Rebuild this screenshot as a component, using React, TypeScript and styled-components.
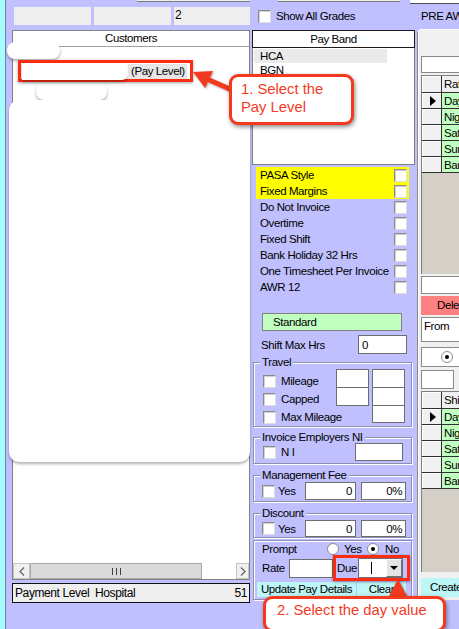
import React from 'react';
import styled, { createGlobalStyle } from 'styled-components';

const GlobalStyle = createGlobalStyle`
  html, body {
    margin: 0;
    padding: 0;
    background: #c0c0ff;
  }
  body {
    font-family: "Liberation Sans", Arial, sans-serif;
    font-size: 11.5px;
    color: #000;
  }
  * {
    box-sizing: border-box;
  }
`;

const Screen = styled.div`
  position: relative;
  width: 459px;
  height: 629px;
  overflow: hidden;
  display: flex;
  background: #c0c0ff;
  font-size: 11.5px;
  letter-spacing: -0.4px;
  line-height: 12px;
`;

const EdgeStrip = styled.div`
  width: 6px;
  flex-shrink: 0;
  background: #a6fdfd;
  border-right: 1px solid #7c7c9c;
`;

const Column = styled.div<{ $w: number }>`
  width: ${(p) => p.$w}px;
  flex-shrink: 0;
  display: flex;
  flex-direction: column;
`;

const StubLine = styled.div<{ $left: number; $w: number }>`
  margin-left: ${(p) => p.$left}px;
  width: ${(p) => p.$w}px;
  height: 2px;
  background: #f0f0f0;
  border-bottom: 1px solid #7a7a7a;
`;

/* ---------- left column ---------- */

const GrayRow = styled.div`
  display: flex;
  gap: 3px;
  margin-top: 5px;
  padding-left: 8px;
  height: 18px;
`;

const GrayCell = styled.div<{ $w: number }>`
  width: ${(p) => p.$w}px;
  background: #efefef;
  padding: 2px 0 0 1px;
  font-size: 12px;
`;

const CustomersPanel = styled.div`
  margin: 5px 0 0 6px;
  width: 238px;
  height: 550px;
  background: #fff;
  border: 1px solid #828282;
  display: flex;
  flex-direction: column;
`;

const PanelHeader = styled.div`
  height: 16px;
  line-height: 15px;
  text-align: center;
  border-bottom: 1px solid #a0a0a0;
`;

const ListArea = styled.div`
  flex: 1;
`;

const HScroll = styled.div`
  height: 16px;
  display: flex;
  background: #fff;
`;

const ScrollBtn = styled.div<{ $w: number }>`
  width: ${(p) => p.$w}px;
  background: #f0f0f0;
  border: 1px solid #c4c4c4;
  display: flex;
  align-items: center;
  justify-content: center;
`;

const ScrollThumb = styled.div`
  width: 172px;
  background: #dadada;
  border: 1px solid #a8a8a8;
  display: flex;
  align-items: center;
  justify-content: center;
  gap: 1px;
`;

const Grip = styled.span`
  width: 1px;
  height: 7px;
  background: #404040;
  margin: 0 1px;
`;

const ScrollTrack = styled.div`
  flex: 1;
  background: #fff;
`;

const StatusBar = styled.div`
  margin: 3px 0 0 6px;
  width: 238px;
  height: 20px;
  background: #efefef;
  border: 1px solid #111;
  display: flex;
  align-items: center;
  justify-content: space-between;
  padding: 0 2px;
  font-size: 12px;
  white-space: pre;
`;

/* ---------- shared controls ---------- */

const CheckBox = styled.span`
  display: inline-block;
  flex-shrink: 0;
  width: 13px;
  height: 13px;
  background: #fff;
  border: 1px solid;
  border-color: #8a8a8a #dedede #dedede #8a8a8a;
  box-shadow: inset 1px 1px 0 #d2d2d2;
`;

const Radio = styled.span<{ $checked?: boolean }>`
  display: inline-flex;
  flex-shrink: 0;
  width: 12px;
  height: 12px;
  border-radius: 50%;
  background: #fff;
  border: 1px solid #8c8c8c;
  align-items: center;
  justify-content: center;
  &::after {
    content: '';
    width: 4px;
    height: 4px;
    border-radius: 50%;
    background: ${(p) => (p.$checked ? '#000' : 'transparent')};
  }
`;

const TextBox = styled.div<{ $w: number; $h?: number; $right?: boolean }>`
  width: ${(p) => p.$w}px;
  height: ${(p) => p.$h ?? 19}px;
  flex-shrink: 0;
  background: #fff;
  border: 1px solid #6e6e6e;
  padding: 0 3px;
  display: flex;
  align-items: center;
  justify-content: ${(p) => (p.$right ? 'flex-end' : 'flex-start')};
`;

const Label = styled.span<{ $ml?: number; $w?: number }>`
  margin-left: ${(p) => p.$ml ?? 0}px;
  width: ${(p) => (p.$w ? `${p.$w}px` : 'auto')};
  flex-shrink: 0;
  white-space: nowrap;
`;

/* ---------- middle column ---------- */

const ShowRow = styled.div`
  margin-top: 6px;
  height: 16px;
  padding-left: 8px;
  display: flex;
  align-items: center;
  gap: 5px;
  white-space: nowrap;
`;

const PayBand = styled.div`
  margin: 6px 0 0 2px;
  width: 163px;
`;

const PayBandHeader = styled.div`
  height: 18px;
  line-height: 16px;
  background: #fff;
  border: 1px solid #1a1a1a;
  text-align: center;
  overflow: hidden;
`;

const PayBandList = styled.div`
  height: 117px;
  background: #fff;
  border: 1px solid #808080;
  border-top: none;
  padding: 1px;
  overflow: hidden;
`;

const BandItem = styled.div<{ $selected?: boolean }>`
  width: 133px;
  height: 14px;
  line-height: 14px;
  padding-left: 6px;
  background: ${(p) => (p.$selected ? '#ebebeb' : 'transparent')};
`;

const Options = styled.div`
  margin: 2px 0 0 6px;
  width: 153px;
`;

const OptionRow = styled.div<{ $hl?: boolean }>`
  height: 16px;
  display: flex;
  align-items: center;
  justify-content: space-between;
  padding: 0 2px 0 4px;
  white-space: nowrap;
  background: ${(p) => (p.$hl ? '#ffff00' : 'transparent')};
`;

const StandardBox = styled.div`
  margin: 18px 0 0 12px;
  width: 140px;
  height: 18px;
  line-height: 16px;
  padding-left: 10px;
  background: #c0ffc0;
  border: 1px solid #808080;
`;

const FieldRow = styled.div`
  margin-top: 4px;
  height: 19px;
  padding: 0 10px 0 11px;
  display: flex;
  align-items: center;
  justify-content: space-between;
  white-space: nowrap;
`;

const GroupBox = styled.div<{ $mt: number; $h: number }>`
  margin: ${(p) => p.$mt}px 0 0 3px;
  width: 159px;
  height: ${(p) => p.$h}px;
  border: 1px solid #8e8eae;
  box-shadow: inset 1px 1px 0 #fff, 1px 1px 0 #fff;
  display: flex;
  flex-direction: column;
`;

const GroupTitle = styled.div`
  align-self: flex-start;
  margin: -7px 0 0 6px;
  padding: 0 2px;
  height: 12px;
  line-height: 12px;
  background: #c0c0ff;
  white-space: nowrap;
`;

const TravelBody = styled.div`
  display: flex;
  margin-top: 1px;
  padding-left: 9px;
`;

const CheckStack = styled.div`
  width: 73px;
  margin-top: 3px;
  display: flex;
  flex-direction: column;
`;

const CheckLine = styled.div`
  height: 18px;
  display: flex;
  align-items: center;
  gap: 5px;
  white-space: nowrap;
`;

const BoxStack = styled.div<{ $ml?: number }>`
  margin-left: ${(p) => p.$ml ?? 0}px;
  display: flex;
  flex-direction: column;
  & > * + * {
    margin-top: -1px;
  }
`;

const GroupRow = styled.div<{ $mt?: number; $h: number; $pl?: number }>`
  margin-top: ${(p) => p.$mt ?? 0}px;
  height: ${(p) => p.$h}px;
  padding-left: ${(p) => p.$pl ?? 9}px;
  display: flex;
  align-items: center;
`;

const Combo = styled.div`
  width: 45px;
  height: 20px;
  background: #fff;
  border: 1px solid #6e6e6e;
  display: flex;
  align-items: stretch;
`;

const Caret = styled.span`
  width: 1px;
  margin: 3px 0 3px 12px;
  background: #000;
`;

const ComboButton = styled.div`
  margin-left: auto;
  width: 16px;
  background: #e4e4e4;
  border: 1px solid;
  border-color: #fff #707070 #707070 #fff;
  display: flex;
  align-items: center;
  justify-content: center;
  &::after {
    content: '';
    border-top: 4px solid #000;
    border-left: 4px solid transparent;
    border-right: 4px solid transparent;
  }
`;

const CyanButton = styled.div<{ $w: number; $ml?: number }>`
  width: ${(p) => p.$w}px;
  margin-left: ${(p) => p.$ml ?? 0}px;
  height: 15px;
  background: #bdf6f6;
  text-align: center;
  line-height: 15px;
  overflow: hidden;
  white-space: nowrap;
`;

/* ---------- right column ---------- */

const RightTop = styled.div`
  margin-left: -7px;
  width: 49px;
  height: 4px;
  background: #fff;
  border-bottom: 1px solid #505050;
`;

const PreLabel = styled.div`
  margin-top: 6px;
  padding-left: 4px;
  height: 12px;
  white-space: nowrap;
`;

const TabPage = styled.div`
  margin-top: 7px;
  width: 70px;
  height: 571px;
  background: #f0f0f0;
  border-left: 1px solid #8a8a8a;
  border-top: 1px solid #fff;
  box-shadow: inset 1px 0 0 #fff;
  padding-left: 3px;
  display: flex;
  flex-direction: column;
  clip-path: polygon(3px 0, 100% 0, 100% 100%, 0 100%, 0 3px);
`;

const Field = styled.div<{ $mt: number; $h: number; $w?: number }>`
  margin-top: ${(p) => p.$mt}px;
  height: ${(p) => p.$h}px;
  width: ${(p) => p.$w ?? 66}px;
  background: #fff;
  border: 1px solid #8a8a8a;
  padding: 2px 0 0 2px;
  flex-shrink: 0;
`;

const RadioField = styled(Field)`
  display: flex;
  align-items: center;
  padding: 0 0 0 19px;
`;

const DeleteBtn = styled.div`
  margin-top: 2px;
  height: 19px;
  width: 66px;
  background: #ff8080;
  padding-left: 16px;
  line-height: 19px;
  white-space: nowrap;
`;

const CreateBtn = styled.div`
  margin-top: 6px;
  height: 19px;
  width: 66px;
  background: #bdf6f6;
  padding-left: 9px;
  line-height: 19px;
  white-space: nowrap;
`;

const Grid = styled.div<{ $mt: number; $h: number }>`
  margin-top: ${(p) => p.$mt}px;
  height: ${(p) => p.$h}px;
  width: 66px;
  background: #d4d0c8;
  border-left: 1px solid #808080;
  border-top: 1px solid #808080;
  display: flex;
  flex-direction: column;
  flex-shrink: 0;
`;

const GridRow = styled.div<{ $h: number }>`
  height: ${(p) => p.$h}px;
  display: flex;
`;

const Selector = styled.div`
  width: 20px;
  background: #f0f0f0;
  border-right: 1px solid #303030;
  border-bottom: 1px solid #303030;
  box-shadow: inset 1px 1px 0 #fff;
  display: flex;
  align-items: center;
  justify-content: center;
`;

const Pointer = styled.span`
  margin-left: 3px;
  border-left: 6px solid #000;
  border-top: 5px solid transparent;
  border-bottom: 5px solid transparent;
`;

const Cell = styled.div<{ $header?: boolean }>`
  flex: 1;
  background: ${(p) => (p.$header ? '#f0f0f0' : '#c0ffc0')};
  border-bottom: 1px solid #303030;
  padding-left: 2px;
  display: flex;
  align-items: center;
  white-space: nowrap;
  overflow: hidden;
`;

/* ---------- overlays ---------- */

const Redaction = styled.div<{ $x: number; $y: number; $w: number; $h: number; $r?: number }>`
  position: absolute;
  left: ${(p) => p.$x}px;
  top: ${(p) => p.$y}px;
  width: ${(p) => p.$w}px;
  height: ${(p) => p.$h}px;
  background: #fff;
  border-radius: ${(p) => p.$r ?? 8}px;
  box-shadow: 0 2px 3px rgba(0, 0, 0, 0.3);
`;

const Highlight = styled.div<{ $x: number; $y: number; $w: number; $h: number }>`
  position: absolute;
  left: ${(p) => p.$x}px;
  top: ${(p) => p.$y}px;
  width: ${(p) => p.$w}px;
  height: ${(p) => p.$h}px;
  border: 3px solid #fb2c12;
  box-shadow: 0 1px 3px rgba(0, 0, 0, 0.35);
  display: flex;
  align-items: center;
`;

const PayField = styled.div`
  margin-left: 1px;
  width: 106px;
  height: 17px;
  flex-shrink: 0;
  background: #fff;
  border-radius: 0 6px 6px 0;
  box-shadow: 0 2px 3px rgba(0, 0, 0, 0.3);
`;

const PayTag = styled.div`
  width: 59px;
  height: 15px;
  flex-shrink: 0;
  background: #e6e6e6;
  padding-left: 3px;
  line-height: 15px;
  white-space: nowrap;
`;

const Callout = styled.div<{ $x: number; $y: number; $w: number; $h: number; $pt: number; $pl: number }>`
  position: absolute;
  left: ${(p) => p.$x}px;
  top: ${(p) => p.$y}px;
  width: ${(p) => p.$w}px;
  height: ${(p) => p.$h}px;
  padding: ${(p) => p.$pt}px 0 0 ${(p) => p.$pl}px;
  background: #fff;
  border: 3px solid #f33a1f;
  border-radius: 9px;
  box-shadow: 1px 2px 4px rgba(0, 0, 0, 0.45);
  color: #f33a1f;
  font-family: "Liberation Sans", Arial, Helvetica, sans-serif;
  font-size: 14.8px;
  line-height: 18px;
  letter-spacing: 0;
  white-space: nowrap;
`;

const ArrowLayer = styled.svg`
  position: absolute;
  left: 0;
  top: 0;
  width: 459px;
  height: 629px;
  pointer-events: none;
  filter: drop-shadow(1px 1px 1px rgba(0, 0, 0, 0.35));
`;

const options = [
  { label: 'PASA Style', hl: true },
  { label: 'Fixed Margins', hl: true },
  { label: 'Do Not Invoice' },
  { label: 'Overtime' },
  { label: 'Fixed Shift' },
  { label: 'Bank Holiday 32 Hrs' },
  { label: 'One Timesheet Per Invoice' },
  { label: 'AWR 12' },
];

const rateRows = ['Day', 'Night', 'Saturday', 'Sunday', 'Bank Holiday'];

const RateGrid = ({ mt, h, header }: { mt: number; h: number; header: string }) => (
  <Grid $mt={mt} $h={h}>
    <GridRow $h={17}>
      <Selector />
      <Cell $header>{header}</Cell>
    </GridRow>
    {rateRows.map((r, i) => (
      <GridRow $h={16} key={r}>
        <Selector>{i === 0 && <Pointer />}</Selector>
        <Cell>{r}</Cell>
      </GridRow>
    ))}
  </Grid>
);

const Chevron = ({ dir }: { dir: 'l' | 'r' }) => (
  <svg width="6" height="9" viewBox="0 0 6 9">
    <polyline
      points={dir === 'l' ? '5,0.5 1,4.5 5,8.5' : '1,0.5 5,4.5 1,8.5'}
      fill="none"
      stroke="#606060"
      strokeWidth="1.2"
    />
  </svg>
);

export default function App() {
  return (
    <>
      <GlobalStyle />
      <Screen>
        <EdgeStrip />

        <Column $w={244}>
          <StubLine $left={131} $w={113} />
          <GrayRow>
            <GrayCell $w={77} />
            <GrayCell $w={77} />
            <GrayCell $w={76}>2</GrayCell>
          </GrayRow>
          <CustomersPanel>
            <PanelHeader>Customers</PanelHeader>
            <ListArea />
            <HScroll>
              <ScrollBtn $w={17}>
                <Chevron dir="l" />
              </ScrollBtn>
              <ScrollThumb>
                <Grip />
                <Grip />
                <Grip />
              </ScrollThumb>
              <ScrollTrack />
              <ScrollBtn $w={13}>
                <Chevron dir="r" />
              </ScrollBtn>
            </HScroll>
          </CustomersPanel>
          <StatusBar>
            <span>Payment Level  Hospital</span>
            <span>51</span>
          </StatusBar>
        </Column>

        <Column $w={167}>
          <StubLine $left={28} $w={122} />
          <ShowRow>
            <CheckBox />
            <span>Show All Grades</span>
          </ShowRow>
          <PayBand>
            <PayBandHeader>Pay Band</PayBandHeader>
            <PayBandList>
              <BandItem $selected>HCA</BandItem>
              <BandItem>BGN</BandItem>
            </PayBandList>
          </PayBand>
          <Options>
            {options.map((o) => (
              <OptionRow key={o.label} $hl={o.hl}>
                <span>{o.label}</span>
                <CheckBox />
              </OptionRow>
            ))}
          </Options>
          <StandardBox>Standard</StandardBox>
          <FieldRow>
            <span>Shift Max Hrs</span>
            <TextBox $w={49}>0</TextBox>
          </FieldRow>

          <GroupBox $mt={8} $h={65}>
            <GroupTitle>Travel</GroupTitle>
            <TravelBody>
              <CheckStack>
                <CheckLine>
                  <CheckBox />
                  <span>Mileage</span>
                </CheckLine>
                <CheckLine>
                  <CheckBox />
                  <span>Capped</span>
                </CheckLine>
                <CheckLine>
                  <CheckBox />
                  <span>Max Mileage</span>
                </CheckLine>
              </CheckStack>
              <BoxStack>
                <TextBox $w={33} />
                <TextBox $w={33} />
              </BoxStack>
              <BoxStack $ml={3}>
                <TextBox $w={33} />
                <TextBox $w={33} />
                <TextBox $w={33} $h={18} />
              </BoxStack>
            </TravelBody>
          </GroupBox>

          <GroupBox $mt={10} $h={27}>
            <GroupTitle>Invoice Employers NI</GroupTitle>
            <GroupRow $h={18}>
              <CheckBox />
              <Label $ml={5} $w={74}>N I</Label>
              <TextBox $w={48} $h={18} />
            </GroupRow>
          </GroupBox>

          <GroupBox $mt={11} $h={27}>
            <GroupTitle>Management Fee</GroupTitle>
            <GroupRow $mt={1} $h={18} $pl={8}>
              <CheckBox />
              <Label $ml={3} $w={27}>Yes</Label>
              <TextBox $w={51} $h={18} $right>0</TextBox>
              <TextBox $w={45} $h={18} $right style={{ marginLeft: 5 }}>0%</TextBox>
            </GroupRow>
          </GroupBox>

          <GroupBox $mt={11} $h={25}>
            <GroupTitle>Discount</GroupTitle>
            <GroupRow $mt={1} $h={17} $pl={8}>
              <CheckBox />
              <Label $ml={3} $w={27}>Yes</Label>
              <TextBox $w={51} $h={17} $right>0</TextBox>
              <TextBox $w={45} $h={17} $right style={{ marginLeft: 5 }}>0%</TextBox>
            </GroupRow>
          </GroupBox>

          <GroupBox $mt={2} $h={60}>
            <GroupRow $mt={2} $h={12} $pl={8}>
              <Label $w={65}>Prompt</Label>
              <Radio />
              <Label $ml={5} $w={23}>Yes</Label>
              <Radio $checked />
              <Label $ml={6}>No</Label>
            </GroupRow>
            <GroupRow $mt={3} $h={20} $pl={8}>
              <Label $w={27}>Rate</Label>
              <TextBox $w={44} $h={19} />
              <Label $ml={4} $w={21}>Due</Label>
              <Combo>
                <Caret />
                <ComboButton />
              </Combo>
            </GroupRow>
            <GroupRow $mt={4} $h={15} $pl={3}>
              <CyanButton $w={99}>Update Pay Details</CyanButton>
              <CyanButton $w={49} $ml={1}>Clear</CyanButton>
            </GroupRow>
          </GroupBox>
        </Column>

        <Column $w={42}>
          <RightTop />
          <PreLabel>PRE AWR</PreLabel>
          <TabPage>
            <Field $mt={26} $h={17} />
            <RateGrid mt={2} h={199} header="Rate" />
            <Field $mt={2} $h={18} />
            <DeleteBtn>Delete</DeleteBtn>
            <Field $mt={2} $h={25}>From</Field>
            <RadioField $mt={5} $h={20}>
              <Radio $checked />
            </RadioField>
            <Field $mt={3} $h={19} $w={33} />
            <RateGrid mt={2} h={181} header="Shift" />
            <CreateBtn>Create</CreateBtn>
          </TabPage>
        </Column>

        <Redaction $x={7} $y={42} $w={53} $h={17} />
        <Redaction $x={36} $y={82} $w={71} $h={18} />
        <Redaction $x={9} $y={100} $w={241} $h={362} $r={10} />

        <Highlight $x={18} $y={60} $w={175} $h={22}>
          <PayField />
          <PayTag>(Pay Level)</PayTag>
        </Highlight>
        <Highlight $x={333} $y={555} $w={77} $h={26} />

        <ArrowLayer viewBox="0 0 459 629">
          <line x1="232" y1="90" x2="207" y2="79" stroke="#f33a1f" strokeWidth="5" />
          <polygon points="193,72 213,71 205,88" fill="#f33a1f" />
          <polygon points="398,579 388,598 408,598" fill="#f33a1f" />
        </ArrowLayer>

        <Callout $x={229} $y={74} $w={125} $h={51} $pt={3} $pl={9}>
          1. Select the
          <br />
          Pay Level
        </Callout>
        <Callout $x={263} $y={596} $w={183} $h={36} $pt={2} $pl={11}>
          2. Select the day value
        </Callout>
      </Screen>
    </>
  );
}
